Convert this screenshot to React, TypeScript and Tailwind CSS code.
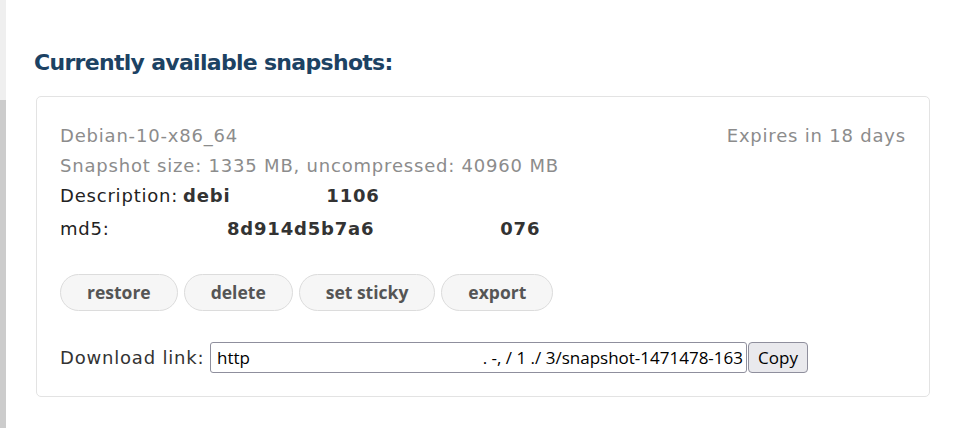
export default function App() {
  const body = { fontFamily: '"DejaVu Sans", Verdana, sans-serif' }
  const ui = { fontFamily: '"Open Sans", "Noto Sans", sans-serif' }
  const buttons = ['restore', 'delete', 'set sticky', 'export']

  return (
    <div className="flex min-h-screen bg-white" style={body}>
      <div className="flex w-[6px] flex-col">
        <div className="h-[100px] bg-[#efefef]" />
        <div className="flex-1 bg-[#cccccc]" />
      </div>
      <div className="flex-1 pl-[28px] pr-[37px] pt-[49px]">
        <h2 className="text-[22px] font-bold leading-[28px] tracking-[-0.7px] text-[#1c4263]">
          Currently available snapshots:
        </h2>
        <div className="ml-[2px] mt-[19px] rounded-[5px] border border-[#e3e3e3] px-[23px] pb-[23px] pt-[24px] text-[18px] tracking-[0.8px]">
          <div className="flex justify-between leading-[30px] text-[#8c8c8c]">
            <span>Debian-10-x86_64</span>
            <span>Expires in 18 days</span>
          </div>
          <div className="leading-[30px] text-[#8c8c8c]">
            Snapshot size: 1335 MB, uncompressed: 40960 MB
          </div>
          <div className="flex leading-[30px] text-[#222]">
            <span className="w-[123px] shrink-0">Description:</span>
            <span className="font-bold text-[#333]">debi</span>
            <span className="w-[96px] shrink-0" />
            <span className="font-bold text-[#333]">1106</span>
          </div>
          <div className="mt-[3px] flex leading-[30px] text-[#222]">
            <span className="w-[167px] shrink-0">md5:</span>
            <span className="font-bold text-[#333]">8d914d5b7a6</span>
            <span className="w-[126px] shrink-0" />
            <span className="font-bold text-[#333]">076</span>
          </div>
          <div className="mt-[30px] flex gap-[6px] tracking-normal" style={ui}>
            {buttons.map((b) => (
              <button
                key={b}
                className="h-[37px] rounded-full border border-[#dcdcdc] bg-[#f6f6f6] px-[26px] text-[17.5px] font-bold text-[#555]"
              >
                {b}
              </button>
            ))}
          </div>
          <div className="mt-[31px] flex items-center">
            <span className="w-[150px] shrink-0 text-[#333]">Download link:</span>
            <div
              className="flex h-[31px] w-[537px] items-center overflow-hidden whitespace-nowrap rounded-[3px] border border-[#8f8f9d] pl-[6px] pr-[3px] text-[17px] tracking-normal text-black"
              style={ui}
            >
              <span>http</span>
              <span className="ml-auto">.  -, / 1 ./ 3/snapshot-1471478-163</span>
            </div>
            <button
              className="ml-[1px] h-[31px] w-[60px] rounded-[4px] border border-[#8f8f9d] bg-[#e9e9ed] text-[17px] tracking-normal text-black"
              style={ui}
            >
              Copy
            </button>
          </div>
        </div>
      </div>
    </div>
  )
}
